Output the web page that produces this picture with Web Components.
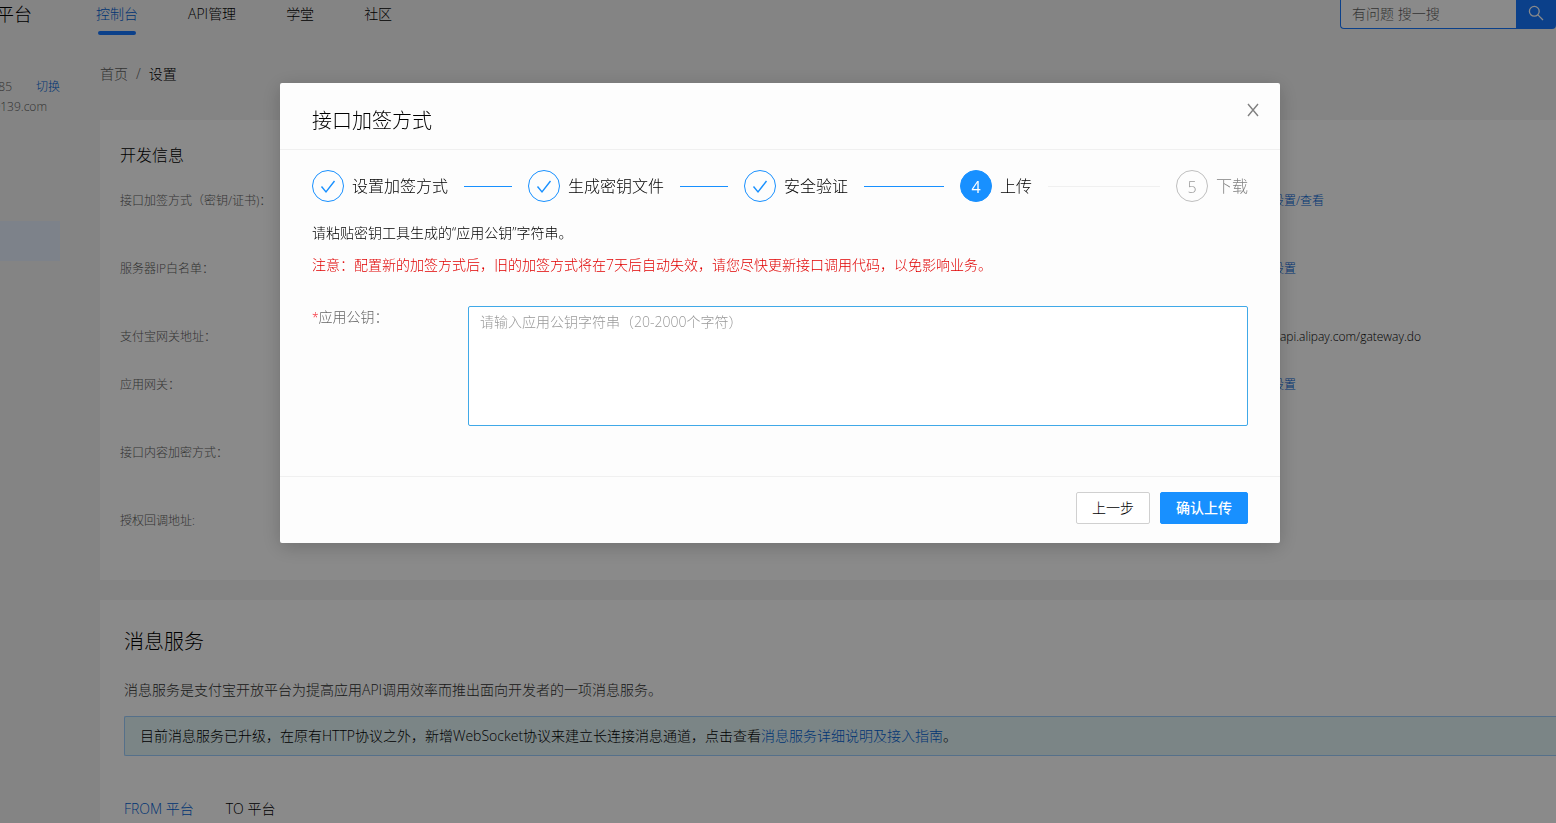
<!DOCTYPE html>
<html lang="zh-CN">
<head>
<meta charset="utf-8">
<meta name="viewport" content="width=device-width, initial-scale=1">
<title>接口加签方式</title>
<style>
  html, body { margin: 0; height: 100%; }
  body {
    --blue: #1890ff;
    --link: #0062d6;
    --ink: #000;
    --muted: #606060;
    overflow: hidden;
    background: #f4f4f4;
    color: var(--ink);
    font: 300 14px/22px "Open Sans", "Noto Sans CJK SC", sans-serif;
  }
</style>
</head>
<body>
<console-page></console-page>
<modal-dialog heading="接口加签方式">
  <step-list>
    <step-item state="done" number="1">设置加签方式</step-item>
    <step-item state="done" number="2">生成密钥文件</step-item>
    <step-item state="done" number="3">安全验证</step-item>
    <step-item state="active" number="4">上传</step-item>
    <step-item state="wait" number="5" last>下载</step-item>
  </step-list>
  <key-form></key-form>
  <app-button slot="footer">上一步</app-button>
  <app-button slot="footer" primary>确认上传</app-button>
</modal-dialog>

<script>
const define = (name, html, setup) => {
  const template = document.createElement('template');
  template.innerHTML = html;
  customElements.define(name, class extends HTMLElement {
    constructor() {
      super();
      this.attachShadow({ mode: 'open' }).append(template.content.cloneNode(true));
      if (setup) setup(this, this.shadowRoot);
    }
  });
};

define('top-bar', `
  <style>
    :host { display: flex; height: 40px; align-items: flex-start; font-size: 14px; line-height: 28px; }
    .brand { width: 32px; margin-right: 64px; display: flex; justify-content: flex-end; font-size: 18px; white-space: nowrap; flex: none; }
    nav { display: flex; gap: 50px; flex: 1; }
    a { color: var(--ink); text-decoration: none; white-space: nowrap; }
    a.on { color: var(--link); }
    a.on::after { content: ""; display: block; height: 4px; margin: 3px 2px 0; border-radius: 2px; background: #1677ff; }
    form { display: flex; height: 29px; }
    input { box-sizing: border-box; width: 176px; border: 1px solid #1677ff; border-width: 0 0 1px 1px; border-radius: 0 0 0 4px; padding: 0 11px; background: #fff; font: inherit; outline: 0; }
    input::placeholder { color: var(--muted); opacity: 1; }
    button { width: 40px; border: 0; border-radius: 0 0 4px 0; padding: 0; background: #1677ff; color: #fff; display: grid; place-items: center; }
    svg { display: block; margin-bottom: 4px; }
  </style>
  <div class="brand">平台</div>
  <nav><a class="on" href="#console">控制台</a><a href="#api">API管理</a><a href="#school">学堂</a><a href="#community">社区</a></nav>
  <form role="search">
    <input type="search" aria-label="搜索" placeholder="有问题 搜一搜">
    <button type="button" aria-label="搜索"><svg width="16" height="16" viewBox="0 0 16 16" fill="none" stroke="currentColor" stroke-width="1.3"><circle cx="6.3" cy="6.3" r="4.9"/><path d="M9.9 9.9 15 15"/></svg></button>
  </form>`);

define('side-panel', `
  <style>
    :host { display: block; width: 60px; margin-right: 40px; padding-top: 37px; flex: none; font-size: 12px; line-height: 20px; color: var(--muted); }
    .row { display: flex; justify-content: space-between; }
    .id { width: 12px; } .mail { width: 47px; }
    .id, .mail { display: flex; justify-content: flex-end; white-space: nowrap; }
    a { color: var(--link); text-decoration: none; }
    .selected { height: 40px; margin-top: 104px; background: #e7f0ff; }
  </style>
  <div class="row"><span class="id">85</span><a href="#switch">切换</a></div>
  <div class="mail">@139.com</div>
  <div class="selected"></div>`);

define('crumb-trail', `
  <style>
    :host { display: flex; gap: 8px; padding: 24px 0 36px; line-height: 20px; }
    a, span { color: var(--muted); text-decoration: none; }
    b { font-weight: inherit; }
  </style>
  <a href="#home">首页</a><span>/</span><b>设置</b>`);

define('dev-info', `
  <style>
    :host { display: block; background: #fff; padding: 24px 0 49px 20px; font-size: 12px; line-height: 20px; }
    h2 { margin: 0 0 25px; font-size: 16px; line-height: 22px; font-weight: inherit; }
    dl { margin: 0; display: flex; flex-direction: column; gap: 48px; }
    div { display: flex; justify-content: space-between; }
    .short { margin-bottom: -20px; }
    dt { color: var(--muted); white-space: nowrap; }
    dd { margin: 0; width: 284px; }
    .url { box-sizing: border-box; padding-left: 8px; }
    a { color: var(--link); text-decoration: none; }
  </style>
  <h2>开发信息</h2>
  <dl>
    <div><dt>接口加签方式（密钥/证书)：</dt><dd><a href="#sign">设置/查看</a></dd></div>
    <div><dt>服务器IP白名单：</dt><dd><a href="#ip">设置</a></dd></div>
    <div class="short"><dt>支付宝网关地址：</dt><dd class="url">api.alipay.com/gateway.do</dd></div>
    <div><dt>应用网关：</dt><dd><a href="#gateway">设置</a></dd></div>
    <div><dt>接口内容加密方式：</dt></div>
    <div><dt>授权回调地址:</dt></div>
  </dl>`);

define('message-service', `
  <style>
    :host { display: block; margin-top: 20px; background: #fff; padding: 24px 0 24px 24px; }
    h2 { margin: 0 0 18px; font-size: 20px; line-height: 36px; font-weight: inherit; }
    p { margin: 0 0 14px; line-height: 24px; color: #303030; }
    .alert { border: 1px solid #9dcfff; border-right: 0; border-radius: 2px 0 0 2px; background: #e4f6f8; padding: 0 15px; line-height: 38px; white-space: nowrap; }
    a { color: var(--link); text-decoration: none; }
    nav { display: flex; gap: 32px; margin-top: 42px; }
    nav a { color: var(--ink); } nav a.on { color: var(--link); }
  </style>
  <h2>消息服务</h2>
  <p>消息服务是支付宝开放平台为提高应用API调用效率而推出面向开发者的一项消息服务。</p>
  <div class="alert">目前消息服务已升级，在原有HTTP协议之外，新增WebSocket协议来建立长连接消息通道，点击查看<a href="#guide">消息服务详细说明及接入指南</a>。</div>
  <nav><a class="on" href="#from">FROM 平台</a><a href="#to">TO 平台</a></nav>`);

define('console-page', `
  <style>
    :host { display: block; }
    .columns { display: flex; }
    main { flex: 1; min-width: 0; }
  </style>
  <top-bar></top-bar>
  <div class="columns">
    <side-panel></side-panel>
    <main><crumb-trail></crumb-trail><dev-info></dev-info><message-service></message-service></main>
  </div>`);

define('modal-dialog', `
  <style>
    :host { position: fixed; inset: 0; box-sizing: border-box; display: flex; justify-content: center; align-items: flex-start; padding: 83px 0 0 4px; background: rgba(0, 0, 0, .46); }
    section { width: 1000px; max-width: 100%; background: #fdfdfd; border-radius: 2px; box-shadow: 0 4px 20px rgba(0, 0, 0, .2); }
    header { display: flex; justify-content: space-between; align-items: flex-start; padding: 0 20px 0 32px; border-bottom: 1px solid #f0f0f0; }
    h1 { margin: 0; padding: 24px 0 14px; font-size: 20px; line-height: 28px; font-weight: inherit; }
    button { width: 14px; height: 14px; margin-top: 20px; border: 0; padding: 0; background: none; color: #808080; }
    svg { display: block; }
    .body { padding: 20px 32px 50px; }
    footer { display: flex; justify-content: flex-end; gap: 10px; padding: 15px 32px 19px; border-top: 1px solid #f0f0f0; }
  </style>
  <section role="dialog" aria-modal="true" aria-labelledby="title">
    <header><h1 id="title"></h1><button type="button" aria-label="关闭"><svg width="14" height="14" viewBox="0 0 14 14" fill="none" stroke="currentColor" stroke-width="1.4"><path d="M2 1 12 13M12 1 2 13"/></svg></button></header>
    <div class="body"><slot></slot></div>
    <footer><slot name="footer"></slot></footer>
  </section>`, (host, root) => { root.querySelector('h1').textContent = host.getAttribute('heading'); });

define('step-list', `<style>:host { display: flex; }</style><slot></slot>`);

define('step-item', `
  <style>
    :host { display: flex; align-items: center; flex: 1; font-size: 16px; line-height: 32px; white-space: nowrap; }
    :host([last]) { flex: none; }
    :host([state=wait]) { color: #808080; }
    .dot { box-sizing: border-box; width: 32px; height: 32px; margin-right: 8px; border: 1px solid var(--blue); border-radius: 50%; display: grid; place-items: center; color: var(--blue); flex: none; }
    :host([state=active]) .dot { background: var(--blue); color: #fff; font-weight: 400; }
    :host([state=wait]) .dot { border-color: #bfbfbf; color: #999; }
    .line { flex: 1; height: 1px; margin: 0 16px; background: var(--blue); }
    :host([state=active]) .line { background: #f0f0f0; }
    :host([last]) .line { display: none; }
  </style>
  <span class="dot"></span><slot></slot><span class="line"></span>`, (host, root) => {
    const dot = root.querySelector('.dot');
    if (host.getAttribute('state') === 'done')
      dot.innerHTML = '<svg width="16" height="16" viewBox="0 0 16 16" fill="none" stroke="currentColor" stroke-width="1.4"><path d="M1.5 8.5 6 14 14.5 3"/></svg>';
    else dot.textContent = host.getAttribute('number');
  });

define('key-form', `
  <style>
    :host { display: block; margin-top: 20px; }
    p { margin: 0 0 10px; }
    .warn { color: #e00000; margin-bottom: 30px; }
    .field { display: flex; align-items: flex-start; }
    label { width: 156px; flex: none; color: #666; }
    i { color: #f5222d; font-size: 12px; font-style: normal; }
    textarea { box-sizing: border-box; flex: 1; min-width: 0; height: 120px; border: 1px solid #40a9e8; border-radius: 2px; padding: 4px 11px; background: #fff; font: inherit; color: inherit; resize: none; outline: 0; }
    textarea::placeholder { color: #999; opacity: 1; }
  </style>
  <p>请粘贴密钥工具生成的“应用公钥”字符串。</p>
  <p class="warn">注意：配置新的加签方式后，旧的加签方式将在7天后自动失效，请您尽快更新接口调用代码，以免影响业务。</p>
  <div class="field"><label for="key"><i>*</i>应用公钥：</label><textarea id="key" placeholder="请输入应用公钥字符串（20-2000个字符）"></textarea></div>`);

define('app-button', `
  <style>
    :host { display: block; }
    button { height: 32px; border: 1px solid #d0d0d0; border-radius: 2px; padding: 0 15px; background: #fff; color: var(--ink); font: inherit; display: block; }
    :host([primary]) button { border-color: var(--blue); background: var(--blue); color: #fff; font-weight: 500; }
  </style>
  <button type="button"><slot></slot></button>`);
</script>
</body>
</html>
